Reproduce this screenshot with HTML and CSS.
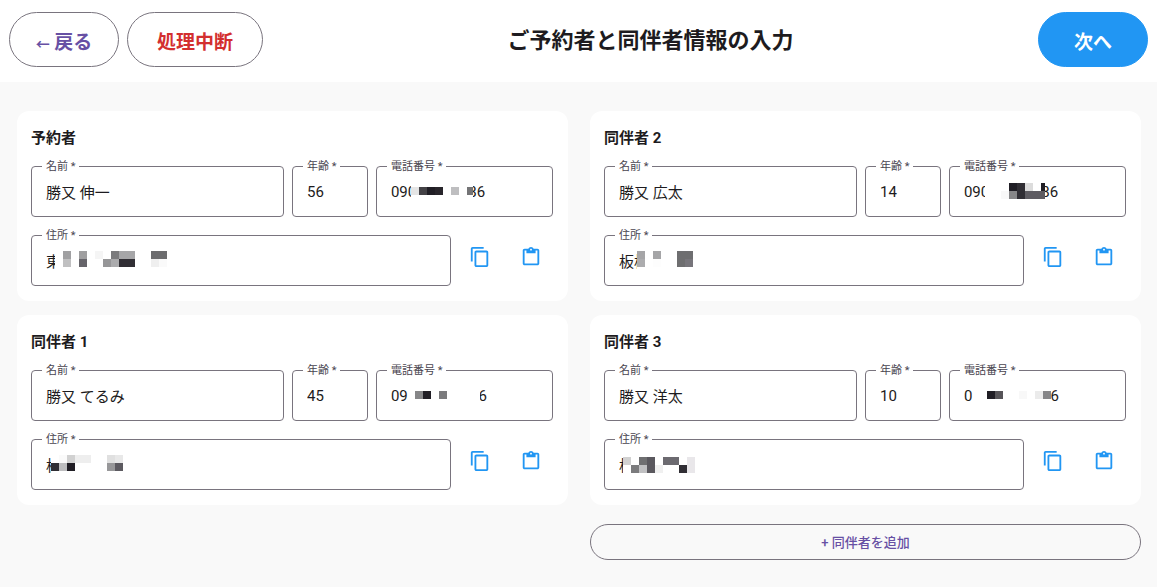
FILE: index.html
```html
<!DOCTYPE html>
<html lang="ja">
<head>
  <meta charset="UTF-8">
  <meta name="viewport" content="width=device-width, initial-scale=1.0">
  <title>ご予約者と同伴者情報の入力</title>
  <link rel="stylesheet" href="styles.css">
</head>
<body>
  <!-- Shared icons -->
  <svg class="icon-defs" aria-hidden="true">
    <symbol id="icon-copy" viewBox="0 0 24 24">
      <path d="M16 1H4c-1.1 0-2 .9-2 2v14h2V3h12V1zm3 4H8c-1.1 0-2 .9-2 2v14c0 1.1.9 2 2 2h11c1.1 0 2-.9 2-2V7c0-1.1-.9-2-2-2zm0 16H8V7h11v14z"/>
    </symbol>
    <symbol id="icon-paste" viewBox="0 0 24 24">
      <path d="M19 3h-4.18C14.4 1.84 13.3 1 12 1s-2.4.84-2.82 2H5c-1.1 0-2 .9-2 2v14c0 1.1.9 2 2 2h14c1.1 0 2-.9 2-2V5c0-1.1-.9-2-2-2zm-7 0c.55 0 1 .45 1 1s-.45 1-1 1-1-.45-1-1 .45-1 1-1zm7 16H5V5h2v3h10V5h2v14z"/>
    </symbol>
  </svg>

  <header class="top-bar">
    <button type="button" class="btn btn-back"><span class="arrow">←</span> 戻る</button>
    <button type="button" class="btn btn-cancel">処理中断</button>
    <h1 class="page-title">ご予約者と同伴者情報の入力</h1>
    <button type="button" class="btn btn-next">次へ</button>
  </header>

  <main class="columns">
    <div class="column">
      <section class="card">
        <h2 class="card-title">予約者</h2>
        <div class="row">
          <div class="field field-name">
            <label for="name0">名前 *</label>
            <input type="text" id="name0" value="勝又 伸一">
          </div>
          <div class="field field-age">
            <label for="age0">年齢 *</label>
            <input type="text" id="age0" value="56">
          </div>
          <div class="field field-tel">
            <label for="tel0">電話番号 *</label>
            <input type="text" id="tel0" value="090              86">
            <svg class="mask" viewBox="0 0 170 51" aria-hidden="true">
              <rect x="35" y="14" width="62" height="24" fill="#fff"/>
              <rect x="35" y="21" width="8" height="8" fill="#e5e5e5"/>
              <rect x="43" y="21" width="8" height="8" fill="#444246"/>
              <rect x="51" y="21" width="8" height="8" fill="#201e25"/>
              <rect x="59" y="21" width="8" height="8" fill="#28252b"/>
              <rect x="75" y="21" width="8" height="8" fill="#bebec0"/>
              <rect x="91" y="21" width="6" height="8" fill="#747476"/>
            </svg>
          </div>
        </div>
        <div class="row">
          <div class="field field-address">
            <label for="address0">住所 *</label>
            <input type="text" id="address0" value="東">
            <svg class="mask" viewBox="0 0 170 51" aria-hidden="true">
              <rect x="24" y="14" width="120" height="24" fill="#fff"/>
              <rect x="32" y="16" width="8" height="8" fill="#a0a0a2"/>
              <rect x="32" y="24" width="8" height="8" fill="#c0c0c1"/>
              <rect x="48" y="16" width="8" height="8" fill="#9f9fa0"/>
              <rect x="48" y="24" width="8" height="8" fill="#66646a"/>
              <rect x="64" y="16" width="8" height="8" fill="#f5f5f5"/>
              <rect x="72" y="24" width="8" height="8" fill="#969698"/>
              <rect x="80" y="16" width="8" height="8" fill="#7b7b7d"/>
              <rect x="80" y="24" width="8" height="8" fill="#ababad"/>
              <rect x="88" y="16" width="16" height="8" fill="#a6a6a8"/>
              <rect x="88" y="24" width="16" height="8" fill="#302e34"/>
              <rect x="120" y="16" width="16" height="8" fill="#6c6c6e"/>
              <rect x="120" y="24" width="8" height="8" fill="#efefef"/>
              <rect x="128" y="24" width="8" height="8" fill="#fafafa"/>
            </svg>
          </div>
          <button type="button" class="icon-btn" aria-label="コピー"><svg><use href="#icon-copy"/></svg></button>
          <button type="button" class="icon-btn" aria-label="貼り付け"><svg><use href="#icon-paste"/></svg></button>
        </div>
      </section>

      <section class="card">
        <h2 class="card-title">同伴者 1</h2>
        <div class="row">
          <div class="field field-name">
            <label for="name1">名前 *</label>
            <input type="text" id="name1" value="勝又 てるみ">
          </div>
          <div class="field field-age">
            <label for="age1">年齢 *</label>
            <input type="text" id="age1" value="45">
          </div>
          <div class="field field-tel">
            <label for="tel1">電話番号 *</label>
            <input type="text" id="tel1" value="09                   6">
            <svg class="mask" viewBox="0 0 170 51" aria-hidden="true">
              <rect x="33" y="14" width="71" height="24" fill="#fff"/>
              <rect x="39" y="21" width="8" height="8" fill="#868688"/>
              <rect x="47" y="21" width="8" height="8" fill="#201e25"/>
              <rect x="63" y="21" width="8" height="8" fill="#7b7b7d"/>
            </svg>
          </div>
        </div>
        <div class="row">
          <div class="field field-address">
            <label for="address1">住所 *</label>
            <input type="text" id="address1" value="板">
            <svg class="mask" viewBox="0 0 170 51" aria-hidden="true">
              <rect x="20" y="14" width="80" height="24" fill="#fff"/>
              <rect x="20" y="24" width="8" height="8" fill="#302e34"/>
              <rect x="28" y="16" width="8" height="8" fill="#fafafa"/>
              <rect x="28" y="24" width="8" height="8" fill="#bdbdbf"/>
              <rect x="36" y="16" width="8" height="8" fill="#d1d1d1"/>
              <rect x="36" y="24" width="8" height="8" fill="#201e25"/>
              <rect x="44" y="16" width="16" height="8" fill="#eeeeee"/>
              <rect x="76" y="16" width="8" height="8" fill="#e0e0e0"/>
              <rect x="76" y="24" width="8" height="8" fill="#979799"/>
              <rect x="84" y="16" width="8" height="8" fill="#e8e8e8"/>
              <rect x="84" y="24" width="8" height="8" fill="#5c5a60"/>
            </svg>
          </div>
          <button type="button" class="icon-btn" aria-label="コピー"><svg><use href="#icon-copy"/></svg></button>
          <button type="button" class="icon-btn" aria-label="貼り付け"><svg><use href="#icon-paste"/></svg></button>
        </div>
      </section>
    </div>

    <div class="column">
      <section class="card">
        <h2 class="card-title">同伴者 2</h2>
        <div class="row">
          <div class="field field-name">
            <label for="name2">名前 *</label>
            <input type="text" id="name2" value="勝又 広太">
          </div>
          <div class="field field-age">
            <label for="age2">年齢 *</label>
            <input type="text" id="age2" value="14">
          </div>
          <div class="field field-tel">
            <label for="tel2">電話番号 *</label>
            <input type="text" id="tel2" value="090              86">
            <svg class="mask" viewBox="0 0 170 51" aria-hidden="true">
              <rect x="36" y="14" width="60" height="24" fill="#fff"/>
              <rect x="52" y="25" width="8" height="8" fill="#f8f8f8"/>
              <rect x="60" y="17" width="8" height="8" fill="#201e25"/>
              <rect x="60" y="25" width="8" height="8" fill="#868688"/>
              <rect x="68" y="17" width="8" height="16" fill="#302e34"/>
              <rect x="76" y="17" width="8" height="8" fill="#dcdcdc"/>
              <rect x="76" y="25" width="20" height="8" fill="#5e5c62"/>
              <rect x="92" y="17" width="4" height="8" fill="#201e25"/>
            </svg>
          </div>
        </div>
        <div class="row">
          <div class="field field-address">
            <label for="address2">住所 *</label>
            <input type="text" id="address2" value="板板">
            <svg class="mask" viewBox="0 0 170 51" aria-hidden="true">
              <rect x="33" y="14" width="60" height="24" fill="#fff"/>
              <rect x="33" y="16" width="8" height="8" fill="#a5a5a7"/>
              <rect x="33" y="24" width="8" height="8" fill="#acacae"/>
              <rect x="49" y="16" width="8" height="8" fill="#a5a5a7"/>
              <rect x="49" y="24" width="8" height="8" fill="#fdfdfd"/>
              <rect x="73" y="16" width="16" height="16" fill="#6e6e70"/>
              <rect x="81" y="24" width="8" height="8" fill="#77757b"/>
            </svg>
          </div>
          <button type="button" class="icon-btn" aria-label="コピー"><svg><use href="#icon-copy"/></svg></button>
          <button type="button" class="icon-btn" aria-label="貼り付け"><svg><use href="#icon-paste"/></svg></button>
        </div>
      </section>

      <section class="card">
        <h2 class="card-title">同伴者 3</h2>
        <div class="row">
          <div class="field field-name">
            <label for="name3">名前 *</label>
            <input type="text" id="name3" value="勝又 洋太">
          </div>
          <div class="field field-age">
            <label for="age3">年齢 *</label>
            <input type="text" id="age3" value="10">
          </div>
          <div class="field field-tel">
            <label for="tel3">電話番号 *</label>
            <input type="text" id="tel3" value="0                     6">
            <svg class="mask" viewBox="0 0 170 51" aria-hidden="true">
              <rect x="38" y="21" width="8" height="8" fill="#201e25"/>
              <rect x="46" y="21" width="8" height="8" fill="#565458"/>
              <rect x="70" y="21" width="8" height="8" fill="#f8f8f8"/>
              <rect x="86" y="21" width="8" height="8" fill="#ebebeb"/>
              <rect x="94" y="21" width="8" height="8" fill="#868688"/>
            </svg>
          </div>
        </div>
        <div class="row">
          <div class="field field-address">
            <label for="address3">住所 *</label>
            <input type="text" id="address3" value="板">
            <svg class="mask" viewBox="0 0 170 51" aria-hidden="true">
              <rect x="19" y="14" width="80" height="24" fill="#fff"/>
              <rect x="19" y="18" width="8" height="8" fill="#d1d1d1"/>
              <rect x="27" y="26" width="8" height="8" fill="#7b7b7d"/>
              <rect x="35" y="18" width="8" height="8" fill="#6f6f71"/>
              <rect x="35" y="26" width="8" height="8" fill="#c0c0c2"/>
              <rect x="43" y="18" width="8" height="16" fill="#5a585e"/>
              <rect x="51" y="26" width="8" height="8" fill="#f0f0f0"/>
              <rect x="59" y="18" width="16" height="8" fill="#6c6a70"/>
              <rect x="75" y="26" width="8" height="8" fill="#302e34"/>
              <rect x="83" y="18" width="8" height="16" fill="#e9e7ea"/>
            </svg>
          </div>
          <button type="button" class="icon-btn" aria-label="コピー"><svg><use href="#icon-copy"/></svg></button>
          <button type="button" class="icon-btn" aria-label="貼り付け"><svg><use href="#icon-paste"/></svg></button>
        </div>
      </section>

      <button type="button" class="btn-add">+ 同伴者を追加</button>
    </div>
  </main>
</body>
</html>
```
FILE: styles.css
```css
:root {
  --text: #1d1b20;
  --label: #49454f;
  --outline: #79747e;
  --purple: #6750a4;
  --red: #d32f2f;
  --blue: #2196f3;
}

* {
  box-sizing: border-box;
}

body {
  margin: 0;
  background: #f9f9f9;
  color: var(--text);
  font-family: Roboto, "Noto Sans CJK JP", sans-serif;
}

button, input {
  font-family: inherit;
}

button {
  cursor: pointer;
}

.icon-defs {
  display: none;
}

/* Header */
.top-bar {
  display: flex;
  align-items: center;
  gap: 8px;
  padding: 12px 9px 15px;
  background: #fff;
}

.page-title {
  flex: 1;
  margin: 0;
  padding-top: 3px;
  text-align: center;
  font-size: 22px;
  line-height: 32px;
  font-weight: 700;
}

.btn {
  min-width: 110px;
  height: 55px;
  padding: 2px 24px 0;
  border: 1px solid var(--outline);
  border-radius: 28px;
  background: #fff;
  font-size: 19px;
  font-weight: 700;
}

.btn-back {
  color: var(--purple);
}

.arrow {
  font-size: 14px;
}

.btn-cancel {
  padding: 2px 29px 0;
  color: var(--red);
}

.btn-next {
  border-color: var(--blue);
  background: var(--blue);
  color: #fff;
}

/* Guest cards */
.columns {
  display: grid;
  grid-template-columns: 1fr 1fr;
  gap: 22px;
  align-items: start;
  padding: 29px 16px 27px 17px;
}

.column {
  display: flex;
  flex-direction: column;
  gap: 14px;
}

.card {
  padding: 15px 15px 15px 14px;
  border-radius: 12px;
  background: #fff;
}

.card-title {
  margin: 0 0 16px;
  font-size: 15px;
  line-height: 24px;
  font-weight: 700;
}

.row {
  display: flex;
  align-items: flex-start;
  gap: 8px;
}

.row + .row {
  gap: 7px;
  margin-top: 18px;
}

/* Outlined text fields */
.field {
  position: relative;
  min-width: 0;
}

.field-name {
  flex: 10 1 0;
}

.field-age {
  flex: 3 1 0;
}

.field-tel {
  flex: 7 1 0;
}

.field-address {
  flex: 1;
}

.field label {
  position: absolute;
  top: -7px;
  left: 11px;
  padding: 0 4px;
  background: #fff;
  color: var(--label);
  font-size: 11px;
  line-height: 16px;
}

.field input {
  display: block;
  width: 100%;
  height: 51px;
  padding: 0 14px;
  border: 1px solid var(--outline);
  border-radius: 4px;
  background: transparent;
  color: var(--text);
  font-size: 15px;
}

.field input:focus {
  outline: none;
  border-color: var(--purple);
}

.mask {
  position: absolute;
  top: 0;
  left: 0;
  width: 170px;
  height: 51px;
  pointer-events: none;
  shape-rendering: crispEdges;
}

.icon-btn {
  display: flex;
  align-items: center;
  justify-content: center;
  width: 44px;
  height: 44px;
  padding: 0;
  border: none;
  border-radius: 50%;
  background: none;
}

.icon-btn svg {
  width: 22px;
  height: 22px;
  fill: var(--blue);
}

.btn-add {
  height: 36px;
  margin-top: 5px;
  padding: 0 16px 2px;
  border: 1px solid var(--outline);
  border-radius: 18px;
  background: transparent;
  color: var(--purple);
  font-size: 13px;
  font-weight: 500;
}
```
